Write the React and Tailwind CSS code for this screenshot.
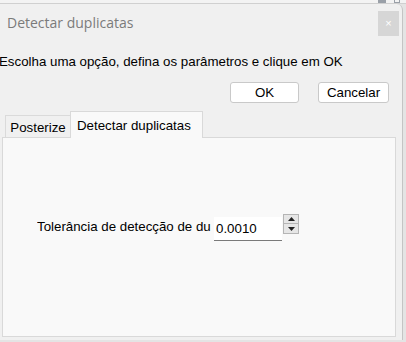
export default function App() {
  return (
    <div className="w-[406px] h-[342px] bg-[#e4e4e4] relative overflow-hidden" style={{ fontFamily: '"Liberation Sans", Arial, sans-serif' }}>
      {/* background window strip */}
      <div className="h-[4px] bg-[#f3f3f3] border-b border-[#d0d0d0] flex justify-end gap-[8px] pr-[6px]">
        <div className="w-[8px] h-[3px] bg-[#9aa0a8]" />
        <div className="w-[6px] h-[3px] border border-[#9aa0a8] border-t-0" />
      </div>

      {/* Dialog */}
      <div className="absolute left-0 top-[4px] w-[403px] h-[336px] bg-[#f0f0f0] border-r border-[#c4c4c4] rounded-tr-[6px] flex flex-col">
        {/* Title bar */}
        <div className="h-[36px] flex items-center justify-between pl-[7px] pr-[3px]">
          <span className="text-[#7b7b7b] text-[14px] pt-[1px]" style={{ fontFamily: '"Open Sans", sans-serif' }}>Detectar duplicatas</span>
          <div className="w-[21px] h-[25px] bg-[#d6d6d6] flex items-center justify-center text-white text-[11px] mt-[2px]">×</div>
        </div>

        <div className="text-[13.3px] text-black leading-none mt-[15px] -ml-[1px]">
          Escolha uma opção, defina os parâmetros e clique em OK
        </div>

        <div className="flex justify-end gap-[19px] pr-[13px] mt-[14px]">
          <button className="w-[69px] h-[21px] bg-white border border-[#c9c9c9] rounded-[3px] text-[13.3px] leading-none">OK</button>
          <button className="w-[71px] h-[21px] bg-white border border-[#c9c9c9] rounded-[3px] text-[13.3px] leading-none">Cancelar</button>
        </div>

        {/* Tabs */}
        <div className="h-[26px] flex items-end pl-[5px] mt-[8px] relative z-10">
          <div className="h-[22px] w-[65px] flex items-center justify-center text-[13.3px] text-black border-t border-l border-[#dadada] bg-[#f0f0f0] pt-[2px]">Posterize</div>
          <div className="h-[27px] w-[133px] flex items-start pt-[4px] pl-[6px] text-[13.3px] text-black bg-[#f9f9f9] border-t border-l border-r border-[#d9d9d9] -mb-[1px]">Detectar duplicatas</div>
        </div>

        <div className="ml-[2px] mr-[6px] flex-1 bg-[#f9f9f9] border border-[#d9d9d9] mb-[3px] flex flex-col">
          <div className="flex items-center mt-[75px] pl-[34px]">
            <span className="text-[13.3px] text-black w-[177px] overflow-hidden whitespace-nowrap">Tolerância de detecção de du</span>
            <div className="w-[68px] h-[24px] bg-white border-b border-[#7a7a7a] flex items-center pl-[2px] text-[13.3px] mt-[4px]">0.0010</div>
            <div className="flex flex-col ml-[1px] -mt-[6px]">
              <div className="w-[16px] h-[10px] bg-[#e6e6e6] border border-[#b5b5b5] flex items-center justify-center">
                <svg width="7" height="4" viewBox="0 0 7 4"><path d="M0 4 L3.5 0 L7 4 Z" fill="#222" /></svg>
              </div>
              <div className="w-[16px] h-[10px] bg-[#e6e6e6] border border-[#b5b5b5] border-t-0 flex items-center justify-center">
                <svg width="7" height="4" viewBox="0 0 7 4"><path d="M0 0 L3.5 4 L7 0 Z" fill="#222" /></svg>
              </div>
            </div>
          </div>
        </div>
      </div>
    </div>
  )
}
